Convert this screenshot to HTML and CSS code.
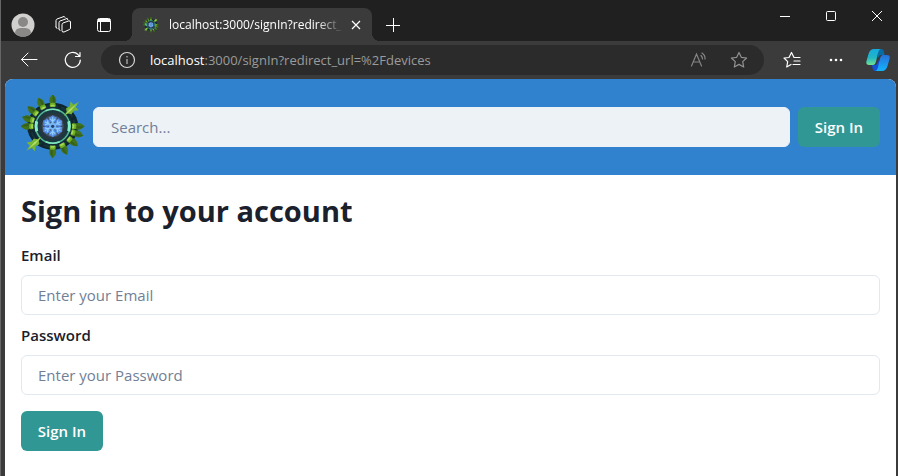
FILE: index.html
```html
<!DOCTYPE html>
<html lang="en">
<head>
<meta charset="utf-8">
<title>Sign in</title>
<link rel="stylesheet" href="styles.css">
</head>
<body>
<svg class="defs" aria-hidden="true">
  <defs>
    <g id="leaf">
      <path d="M0-32 C4-28 4-26 2.500-22 H-2.500 C-4-26-4-28 0-32Z" fill="#41731d"/>
      <path d="M0-32 C3-27 3-24 0-22Z" fill="#35611d"/>
      <rect x="-3" y="-23.500" width="6" height="5" rx="2" fill="#6fae25"/>
      <rect x="-2" y="-21.500" width="4" height="3.500" rx="1" fill="#a3d951"/>
    </g>
    <g id="spear">
      <path d="M0-36 L1.500-30 6-30 3-26 4-22 1-20 0-15 -1-20 -4-22 -3-26 -6-30 -1.500-30Z" fill="#76b637"/>
      <path d="M0-33 L1-24 0-17 -1-24Z" fill="#b1de63"/>
    </g>
    <g id="petal">
      <path d="M0-11 L2-9.500 4-9 3.500-6 2-4 0-2 -2-4 -3.500-6 -4-9 -2-9.500Z" fill="#568fe8"/>
      <path d="M0-9 V-3 M-2.500-7.500 L0-5 2.500-7.500" stroke="#8fd0fb" stroke-width="1.200" fill="none"/>
    </g>
    <symbol id="logo" viewBox="0 0 64 64">
      <g transform="translate(31.700 31.300)">
        <ellipse rx="25.500" ry="23.500" fill="#10262f"/>
        <ellipse rx="22" ry="20.500" fill="none" stroke="#15363f" stroke-width="2" stroke-dasharray="6 3"/>
        <use href="#leaf"/><use href="#leaf" transform="rotate(-27)"/><use href="#leaf" transform="rotate(-52)"/><use href="#leaf" transform="rotate(-73)"/><use href="#leaf" transform="rotate(-90)"/>
        <use href="#leaf" transform="rotate(180)"/><use href="#leaf" transform="rotate(153)"/><use href="#leaf" transform="rotate(128)"/><use href="#leaf" transform="rotate(107)"/><use href="#leaf" transform="rotate(90)"/>
        <circle r="19.500" fill="#142e37"/>
        <circle r="17" fill="#1b3940" stroke="#54b795" stroke-width="1.500"/>
        <path d="M-7-15.500 Q0-18.500 7-15.500 M-7 15.500 Q0 18.500 7 15.500" fill="none" stroke="#7ce6bc" stroke-width="1.500"/>
        <path d="M-16-5 Q-17.500 0-16 5 M16-5 Q17.500 0 16 5" fill="none" stroke="#83efc6" stroke-width="3"/>
        <path d="M-7-13 L7-13 13-4 13 4 7 13 -7 13 -13 4 -13-4Z" fill="#263740"/>
        <circle r="11" fill="#424d5c"/>
        <use href="#petal"/><use href="#petal" transform="rotate(60)"/><use href="#petal" transform="rotate(120)"/><use href="#petal" transform="rotate(180)"/><use href="#petal" transform="rotate(240)"/><use href="#petal" transform="rotate(300)"/>
        <circle r="3.500" fill="#77b8f4"/><circle r="1.600" fill="#263f74"/>
        <use href="#spear" transform="rotate(47)"/><use href="#spear" transform="rotate(227)"/>
      </g>
    </symbol>
  </defs>
</svg>
<div class="window">
  <div class="tabbar">
    <button class="icon-btn" aria-label="Profile"><svg width="24" height="24" viewBox="0 0 24 24"><circle cx="12" cy="12" r="11.500" fill="#d2d0ce"/><circle cx="12" cy="9" r="5" fill="#8a8886"/><path d="M4 20.500 C4 16 7 15 12 15 S20 16 20 20.500 A11.500 11.500 0 0 1 4 20.500Z" fill="#8a8886"/></svg></button>
    <button class="icon-btn workspaces" aria-label="Workspaces"><svg width="18" height="18" viewBox="0 0 18 18" fill="none" stroke="#fff" stroke-linejoin="round" stroke-linecap="round"><path d="M8 8.500 Q8 7.500 9 7 L14.500 5 Q16.500 4.500 16.500 6 V12 Q16.500 13 15.500 13.500 L10 16 Q8 16.500 8 15Z M5 13 V6.500 Q5 5.500 6 5 L13 2.500 M2 11 V4.500 Q2 3.500 3 3 L10 .5 M2 11 L3 12.500 M5 13 L6 14.500 M10 .5 L11 1.500 M13 2.500 L14 4"/></svg></button>
    <button class="icon-btn" aria-label="Tab actions"><svg width="16" height="16" viewBox="0 0 16 16" fill="none" stroke="#fff"><rect x="1.500" y="1.500" width="13" height="13" rx="2"/><path d="M2 3.500 H14" stroke-width="3"/><path d="M4.500 4 V14"/></svg></button>
    <div class="tab">
      <svg class="favicon" width="16" height="16"><use href="#logo"/></svg>
      <span class="tab-title">localhost:3000/signIn?redirect_url</span>
      <button class="icon-btn close" aria-label="Close tab"><svg width="10" height="10" viewBox="0 0 10 10" stroke="#fff" stroke-width="1.200"><path d="M1 1 L9 9 M9 1 L1 9"/></svg></button>
    </div>
    <button class="icon-btn new-tab" aria-label="New tab"><svg width="14" height="14" viewBox="0 0 14 14" stroke="#fff"><path d="M7.500 0 V14 M0 7.500 H14"/></svg></button>
    <div class="controls">
      <button class="icon-btn" aria-label="Minimize"><svg width="10" height="10" viewBox="0 0 10 10" stroke="#fff"><path d="M0 5.500 H10"/></svg></button>
      <button class="icon-btn" aria-label="Maximize"><svg width="10" height="10" viewBox="0 0 10 10" fill="none" stroke="#fff"><rect x=".5" y=".5" width="9" height="9" rx="1"/></svg></button>
      <button class="icon-btn" aria-label="Close"><svg width="10" height="10" viewBox="0 0 10 10" stroke="#fff"><path d="M0 0 L10 10 M10 0 L0 10"/></svg></button>
    </div>
  </div>
  <div class="toolbar">
    <button class="icon-btn" aria-label="Back"><svg width="18" height="18" viewBox="0 0 18 18" fill="none" stroke="#fff" stroke-linecap="round" stroke-linejoin="round"><path d="M17 8.500 H1.500 M8 2 L1.500 8.500 L8 15"/></svg></button>
    <button class="icon-btn" aria-label="Refresh"><svg width="18" height="18" viewBox="0 0 18 18" fill="none" stroke="#fff" stroke-width="1.200" stroke-linecap="round" stroke-linejoin="round"><path d="M16.300 9 A7.500 7.500 0 1 1 14 3.500 L15.500 5.500 M16 1.500 V5.500 H11.500"/></svg></button>
    <div class="address">
      <svg width="18" height="18" viewBox="0 0 18 18" fill="none" stroke="#d6d6d6"><circle cx="9" cy="9" r="7.500" stroke-width="1.200"/><path d="M9 8 V13 M9 5 V6.500"/></svg>
      <span class="url"><b>localhost</b>:3000/signIn?redirect_url=%2Fdevices</span>
      <button class="icon-btn" aria-label="Read aloud"><svg width="18" height="18" viewBox="0 0 18 18" fill="none" stroke="#858585" stroke-width="1.200" stroke-linecap="round"><path d="M1.500 15 L6.500 3 L11.500 15 M3.200 11 H9.800 M11 4.500 Q12.500 6 12.500 8 M12 2 Q15.500 4.500 15 8"/></svg></button>
      <button class="icon-btn" aria-label="Add to favorites"><svg width="18" height="18" viewBox="0 0 18 18" fill="none" stroke="#929292" stroke-width="1.200" stroke-linejoin="round"><path d="M9 1.500 L11.300 6.300 16.600 7 12.700 10.600 13.700 16 9 13.400 4.300 16 5.300 10.600 1.400 7 6.700 6.300Z"/></svg></button>
    </div>
    <button class="icon-btn favorites" aria-label="Favorites"><svg width="18" height="18" viewBox="0 0 18 18" fill="none" stroke="#fff" stroke-width="1.200" stroke-linejoin="round" stroke-linecap="round"><path d="M15 6.500 H11 L8.500 1.500 6 6.500 1 7 4.700 10.600 3.700 16 8 13.500 M11 6.500 H17 M11 10 H17 M10 13.500 H17"/></svg></button>
    <button class="icon-btn" aria-label="Settings and more"><svg width="18" height="4" viewBox="0 0 18 4" fill="#fff"><circle cx="4" cy="2" r="1.300"/><circle cx="9" cy="2" r="1.300"/><circle cx="14" cy="2" r="1.300"/></svg></button>
    <button class="icon-btn copilot" aria-label="Copilot"><svg width="24" height="24" viewBox="0 0 24 24">
      <defs><linearGradient id="ca" x1="0" y1="0" x2="0" y2="1"><stop stop-color="#16a9e0"/><stop offset=".55" stop-color="#22b7c4"/><stop offset="1" stop-color="#71e293"/></linearGradient><linearGradient id="cb" x1="0" y1="0" x2="0" y2="1"><stop stop-color="#2870d8"/><stop offset="1" stop-color="#12b5fb"/></linearGradient></defs>
      <path d="M12 1 H15 Q17.500 1 18 4 L18.500 7 H15 Q13 7 12 10Z" fill="#086ca4"/>
      <path d="M6 17 H10 L13 12 V22 Q13 23 11 23 H9 Q7 23 6.500 20Z" fill="#1550d5"/>
      <path d="M15 1 H8 Q4 1 2.500 6 L.5 13 Q-.5 17 3 17 H7 Q9 17 10 13.500 L12 5 Q13 1 15 1Z" fill="url(#ca)"/>
      <path d="M9 23 H16 Q20 23 21.500 18 L23.500 11 Q24.500 7 21 7 H17 Q15 7 14 10.500 L12 19 Q11 23 9 23Z" fill="url(#cb)"/></svg></button>
  </div>
  <div class="page">
    <header class="header">
      <svg class="logo" width="64" height="64" role="img" aria-label="Home"><use href="#logo"/></svg>
      <input class="search" type="search" placeholder="Search..." aria-label="Search">
      <button class="button">Sign In</button>
    </header>
    <main>
      <h1>Sign in to your account</h1>
      <form>
        <label for="email">Email</label>
        <input class="field" id="email" type="email" placeholder="Enter your Email">
        <label for="password">Password</label>
        <input class="field" id="password" type="password" placeholder="Enter your Password">
        <button class="button submit" type="button">Sign In</button>
      </form>
    </main>
  </div>
</div>
</body>
</html>
```
FILE: styles.css
```css
* { box-sizing: border-box; }
body { margin: 0; font-family: "Segoe UI", "Open Sans", "Noto Sans", sans-serif; color: #1a202c; background: #3b3b3b; }
svg { display: block; flex: none; }
.defs { position: absolute; width: 0; height: 0; }
.logo { overflow: visible; }
.window { min-height: 100vh; display: flex; flex-direction: column; border-left: 1px solid #666; }
.icon-btn { display: grid; place-items: center; flex: none; border: 0; padding: 0; background: none; }

.tabbar { display: flex; align-items: center; height: 41px; padding: 8px 16px 0 10px; background: #202020; }
.workspaces { margin: 0 24px 0 19px; }
.tab { position: relative; display: flex; align-items: center; align-self: stretch; width: 240px; margin-left: 20px; padding: 0 11px; border-radius: 8px 8px 0 0; background: #3b3b3b; color: #fff; }
.tab::before, .tab::after { content: ""; position: absolute; bottom: 0; width: 8px; height: 8px; }
.tab::before { right: 100%; background: radial-gradient(circle at 0 0, #202020 8px, #3b3b3b 8px); }
.tab::after { left: 100%; background: radial-gradient(circle at 100% 0, #202020 8px, #3b3b3b 8px); }
.favicon { margin-right: 10px; }
.tab-title { flex: 1; min-width: 0; overflow: hidden; white-space: nowrap; font-size: 12px; mask-image: linear-gradient(to right, #000 85%, transparent); }
.close { margin-left: 8px; }
.new-tab { margin-left: 14px; }
.controls { display: flex; align-self: flex-start; gap: 36px; margin-left: auto; padding-top: 3px; }

.toolbar { display: flex; align-items: center; height: 38px; padding: 0 8px 0 19px; gap: 26px; background: #3b3b3b; }
.address { display: flex; flex: 1; min-width: 0; align-items: center; height: 30px; margin-left: -7px; padding: 0 16px 0 17px; border-radius: 16px; background: #2b2b2b; gap: 22px; }
.url { flex: 1; min-width: 0; margin-left: -8px; overflow: hidden; white-space: nowrap; font-size: 13px; color: #9b9b9b; }
.url b { font-weight: 400; color: #fff; }
.favorites { margin-left: -7px; }
.copilot { margin-left: -5px; }

.page { flex: 1; margin: 0 2px 0 4px; border-radius: 8px 8px 0 0; overflow: hidden; background: #fff; }
.header { display: flex; align-items: center; gap: 8px; padding: 16px; background: #3182ce; }
input { width: 100%; height: 40px; padding: 0 16px; border: 1px solid #e2e8f0; border-radius: 6px; font: inherit; font-size: 15px; background: #fff; appearance: none; }
input::placeholder { color: #718096; opacity: 1; }
.search { flex: 1; min-width: 0; padding: 0 17px; background: #edf2f7; border-color: #edf2f7; }
.button { flex: none; width: 82px; height: 40px; border: 0; border-radius: 6px; padding: 0; background: #319795; color: #fff; font: inherit; font-size: 15px; font-weight: 600; }
main { padding: 16px; }
h1 { margin: 0 0 12px; font-size: 29px; line-height: 40px; font-weight: 700; }
label { display: block; margin-bottom: 8px; font-size: 15px; line-height: 24px; font-weight: 600; }
.field { display: block; margin-bottom: 8px; }
.submit { margin-top: 8px; }
```
